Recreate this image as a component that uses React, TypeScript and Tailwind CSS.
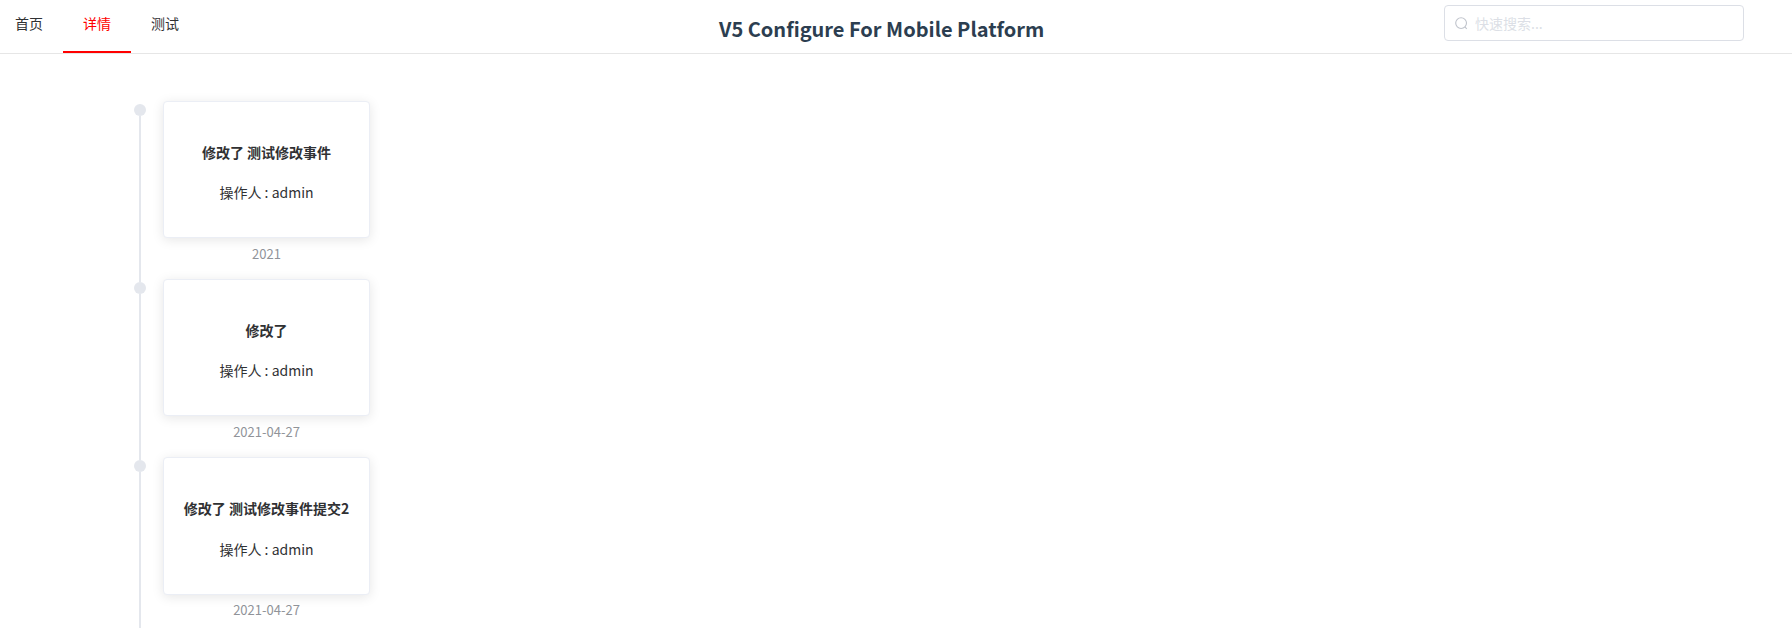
const menu = ['首页', '详情', '测试'];

const events = [
  { title: '修改了 测试修改事件', operator: 'admin', date: '2021' },
  { title: '修改了', operator: 'admin', date: '2021-04-27' },
  { title: '修改了 测试修改事件提交2', operator: 'admin', date: '2021-04-27' },
];

function Header() {
  return (
    <header className="flex h-[54px] border-b border-[#e6e6e6]">
      <nav className="flex w-[719px] shrink-0">
        {menu.map((item) => (
          <a
            key={item}
            className={
              item === '详情'
                ? 'h-[53px] w-[68px] border-b-2 border-[red] text-center text-[14px] leading-[46px] text-[red]'
                : 'h-[53px] w-[68px] text-center text-[14px] leading-[46px] text-[#303133] first:w-[63px] first:pr-[5px]'
            }
          >
            {item}
          </a>
        ))}
      </nav>
      <h1 className="w-[725px] whitespace-nowrap pt-[14px] text-[20px] font-bold leading-[29px] text-[#2c3e50]">
        V5 Configure For Mobile Platform
      </h1>
      <label className="mt-[5px] flex h-9 w-[300px] items-center rounded border border-[#dcdfe6] pl-[9px] text-[14px]">
        <svg className="mr-[7px] size-[14px] shrink-0" viewBox="0 0 14 14" fill="none" stroke="#c0c4cc" strokeWidth="1.1">
          <circle cx="7.1" cy="7.1" r="5.4" />
          <path d="M10.9 10.9l1.9 1.9" />
        </svg>
        <input
          className="w-full bg-transparent leading-5 outline-none placeholder:text-[#dcdfe6]"
          placeholder="快速搜索..."
        />
      </label>
    </header>
  );
}

export default function App() {
  return (
    <div className="h-[628px] overflow-hidden bg-white font-['Noto_Sans_CJK_SC',sans-serif]">
      <Header />
      <ul className="pl-[134px] pt-[47px]">
        {events.map((event, i) => (
          <li key={i} className="flex h-[178.2px]">
            <div className="flex w-[29px] flex-col">
              <span className={i === 0 ? 'h-[3px]' : 'ml-[5px] h-[3px] w-0.5 bg-[#e4e7ed]'} />
              <span className="size-3 shrink-0 rounded-full bg-[#e4e7ed]" />
              <span className="ml-[5px] w-0.5 grow bg-[#e4e7ed]" />
            </div>
            <div className="w-[207px] text-center">
              <div className="h-[137.2px] rounded border border-[#ebeef5] bg-white pt-[40px] text-[14px] leading-5 text-[#303133] shadow-[0_2px_12px_0_rgba(0,0,0,0.1)]">
                <h4 className="whitespace-nowrap font-bold">{event.title}</h4>
                <p className="mt-[20.2px]">操作人 : {event.operator}</p>
              </div>
              <div className="pt-[5.8px] text-[13px] leading-5 text-[#909399]">{event.date}</div>
            </div>
          </li>
        ))}
      </ul>
    </div>
  );
}
